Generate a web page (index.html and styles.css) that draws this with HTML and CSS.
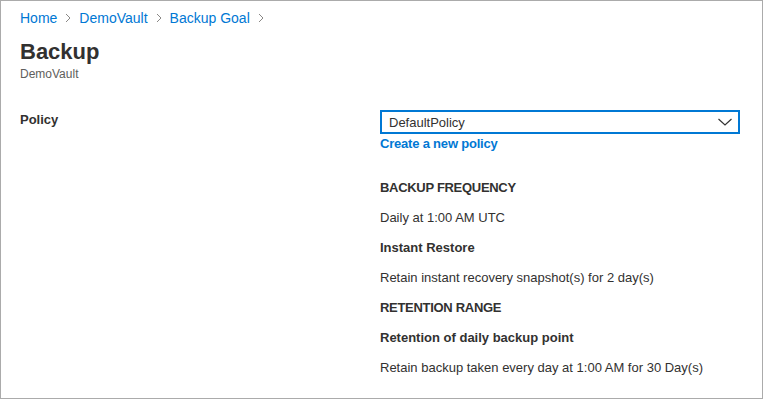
FILE: index.html
```html
<!DOCTYPE html>
<html lang="en">
<head>
    <meta charset="UTF-8">
    <title>Backup</title>
    <link rel="stylesheet" href="styles.css">
</head>
<body>
    <div class="frame">
        <nav class="crumbs">
            <a href="#">Home</a>
            <svg class="sep" width="6" height="10" viewBox="0 0 6 10"><path d="M1 1 L5 5 L1 9" fill="none" stroke="#8a8886" stroke-width="1"/></svg>
            <a href="#">DemoVault</a>
            <svg class="sep" width="6" height="10" viewBox="0 0 6 10"><path d="M1 1 L5 5 L1 9" fill="none" stroke="#8a8886" stroke-width="1"/></svg>
            <a href="#">Backup Goal</a>
            <svg class="sep" width="6" height="10" viewBox="0 0 6 10"><path d="M1 1 L5 5 L1 9" fill="none" stroke="#8a8886" stroke-width="1"/></svg>
        </nav>
        <h1 class="title">Backup</h1>
        <div class="subtitle">DemoVault</div>

        <div class="form-row">
            <div class="label">Policy</div>
            <div class="field">
                <div class="select">
                    <span>DefaultPolicy</span>
                    <svg width="16" height="10" viewBox="0 0 16 10"><path d="M1.5 2 L8 8 L14.5 2" fill="none" stroke="#333" stroke-width="1.2"/></svg>
                </div>
                <a href="#" class="link">Create a new policy</a>

                <div class="details">
                    <div class="heading caps">BACKUP FREQUENCY</div>
                    <div class="text">Daily at 1:00 AM UTC</div>
                    <div class="heading">Instant Restore</div>
                    <div class="text">Retain instant recovery snapshot(s) for 2 day(s)</div>
                    <div class="heading caps">RETENTION RANGE</div>
                    <div class="heading">Retention of daily backup point</div>
                    <div class="text">Retain backup taken every day at 1:00 AM for 30 Day(s)</div>
                </div>
            </div>
        </div>
    </div>
</body>
</html>
```

FILE: styles.css
```css
body {
    margin: 0;
    font-family: "Liberation Sans", Arial, sans-serif;
    color: #323130;
    background: #ffffff;
}
.frame {
    width: 763px;
    height: 399px;
    box-sizing: border-box;
    border: 1px solid #ababab;
    padding: 8px 19px 0;
    overflow: hidden;
}
.crumbs {
    font-size: 14px;
    line-height: 18px;
    display: flex;
    align-items: center;
    gap: 8px;
}
.crumbs a {
    color: #0078d4;
    text-decoration: none;
}
.title {
    font-size: 22px;
    font-weight: 700;
    margin: 10px 0 0;
    line-height: 30px;
}
.subtitle {
    font-size: 12px;
    line-height: 14px;
    color: #605e5c;
}
.form-row {
    display: flex;
    margin-top: 29px;
}
.label {
    width: 360px;
    font-size: 13px;
    font-weight: 700;
    padding-top: 2px;
}
.field {
    width: 360px;
}
.select {
    height: 24px;
    box-sizing: border-box;
    border: 2px solid #0078d4;
    display: flex;
    align-items: center;
    justify-content: space-between;
    padding: 0 5px 0 7px;
    font-size: 13px;
}
.link {
    display: block;
    color: #0078d4;
    font-size: 13px;
    font-weight: 700;
    letter-spacing: -0.2px;
    text-decoration: none;
    margin-top: 2px;
    line-height: 16px;
}
.details {
    margin-top: 21px;
    font-size: 13px;
}
.heading {
    font-weight: 700;
    line-height: 30px;
}
.caps {
    letter-spacing: -0.3px;
}
.text {
    line-height: 30px;
}
```
